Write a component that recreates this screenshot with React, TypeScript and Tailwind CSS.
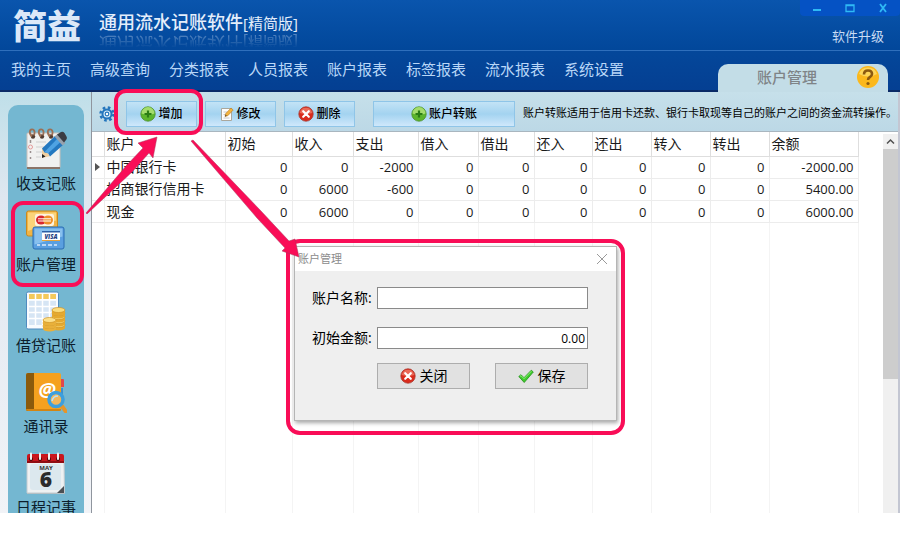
import { useState } from 'react'

const navItems = [
  '我的主页',
  '高级查询',
  '分类报表',
  '人员报表',
  '账户报表',
  '标签报表',
  '流水报表',
  '系统设置'
]

const columns = [
  { title: '账户', width: 'w-[121px]' },
  { title: '初始', width: 'w-[67px]' },
  { title: '收入', width: 'w-[61px]' },
  { title: '支出', width: 'w-[65px]' },
  { title: '借入', width: 'w-[60px]' },
  { title: '借出', width: 'w-[56px]' },
  { title: '还入', width: 'w-[58px]' },
  { title: '还出', width: 'w-[59px]' },
  { title: '转入', width: 'w-[59px]' },
  { title: '转出', width: 'w-[59px]' },
  { title: '余额', width: 'w-[89px]' }
]

const accounts = [
  { name: '中国银行卡', values: ['0', '0', '-2000', '0', '0', '0', '0', '0', '0', '-2000.00'] },
  { name: '招商银行信用卡', values: ['0', '6000', '-600', '0', '0', '0', '0', '0', '0', '5400.00'] },
  { name: '现金', values: ['0', '6000', '0', '0', '0', '0', '0', '0', '0', '6000.00'] }
]

function NotepadIcon() {
  return (
    <svg viewBox="0 0 42 42" className="size-[42px]">
      <rect x="2" y="5" width="33" height="35" rx="1" fill="#f1f1f0" stroke="#c9c0ba" />
      <path d="M2 39h33v2H2z" fill="#8b7468" />
      <path d="M11 14h10M11 19h8M11 24h6M11 29h5" stroke="#cfcfcf" />
      <path d="M5.500 12v3M5.500 23v2M5.500 29v2" stroke="#9a8f8f" strokeWidth="1.500" />
      <circle cx="5.500" cy="19" r="2" fill="none" stroke="#e59a9a" />
      {[7, 16, 25].map((x) => (
        <g key={x} fill="none">
          <circle cx={x + 1} cy="8.500" r="2.200" fill="#4f3a30" />
          <path d={`M${x} 8.500c-4-4-2-8 1-7 2 1 2 3 1 6`} stroke="#9c6f55" strokeWidth="1.800" />
        </g>
      ))}
      <path d="M17 30l0-10 8.500 8z" fill="#f1cf9f" />
      <path d="M17 30l0-4 3.500 2.500z" fill="#222" />
      <path d="M17 20.500L30 8l8 9-13 11.500-2-3.500-3.500-.5z" fill="#2478c0" />
      <path d="M19.500 24L32.500 10.500l3 3.500L23 25.500z" fill="#4fa3e3" />
      <path d="M29.500 8.500l3-2.500 8 9-3 2.500z" fill="#97a2ad" />
      <path d="M32 6.500L36 4q2-1 3.500 1l2 3.500q1 2-.5 3.500l-2 2.500z" fill="#3b3c42" />
    </svg>
  )
}

function CardsIcon() {
  return (
    <svg viewBox="0 0 42 42" className="size-[42px]">
      <rect x="1.500" y="2" width="31" height="25" rx="2" fill="#f2b445" stroke="#c98a1f" />
      <path d="M3 3.500h28v8L3 22z" fill="#fbd47a" />
      <rect x="10" y="5" width="19" height="12" rx="2" fill="#fdf3e0" />
      <ellipse cx="16" cy="11" rx="5" ry="4.500" fill="#d9252e" />
      <ellipse cx="23" cy="11" rx="5" ry="4.500" fill="#f0902a" />
      <path d="M13 9.800h13M13 12h13" stroke="#fff" />
      <rect x="8" y="18" width="31" height="22" rx="2" fill="#5a9fe0" stroke="#2b6db3" />
      <path d="M9.500 19.500h28v8l-28 8z" fill="#88c0ee" />
      <rect x="17" y="22" width="18" height="10" rx="1" fill="#fff" />
      <path d="M17 22h18v1.500H17z" fill="#2a5fa5" />
      <path d="M17 31h18v1H17z" fill="#e9a23b" />
      <text x="26" y="29.500" textAnchor="middle" fontSize="6" fontWeight="900" fontStyle="italic" fill="#1e3f83">
        VISA
      </text>
      <path d="M12 36h3M17 36h4M23 36h4M29 36h3" stroke="#dcecfb" strokeWidth="1.500" />
    </svg>
  )
}

function LedgerIcon() {
  return (
    <svg viewBox="0 0 42 42" className="size-[42px]">
      <rect x="1.500" y="2" width="32" height="37" rx="1.500" fill="#f8fbfe" stroke="#4f8bbf" />
      <path d="M4 4h27v5H4z" fill="#f3c95c" />
      <path d="M4 10h27v25H4z" fill="#d6e5f4" />
      <path
        d="M4 10h27M4 16.500h27M4 22.500h27M4 28.500h27M10.500 3v32M17.500 3v32M24.500 3v32"
        stroke="#fff"
        strokeWidth="1.500"
      />
      {[35, 31, 27, 23, 20].map((y) => (
        <g key={y}>
          <path d={`M27 ${y}v3a6.500 2.500 0 0 0 13 0v-3z`} fill="#e5a92f" />
          <ellipse cx="33.500" cy={y} rx="6.500" ry="2.500" fill="#fbdc7b" stroke="#cf9426" strokeWidth=".7" />
        </g>
      ))}
      {[36, 33, 30].map((y) => (
        <g key={y}>
          <path d={`M18 ${y}v3a6.500 2.500 0 0 0 13 0v-3z`} fill="#e9b03a" />
          <ellipse cx="24.500" cy={y} rx="6.500" ry="2.500" fill="#fde08a" stroke="#cf9426" strokeWidth=".7" />
        </g>
      ))}
    </svg>
  )
}

function AddressBookIcon() {
  return (
    <svg viewBox="0 0 42 42" className="size-[42px]">
      <path d="M35 8h3q1 0 1 1v7h-4z" fill="#e2474c" />
      <path d="M35 17h3v7h-3z" fill="#3c8fce" />
      <rect x="1" y="2" width="35" height="38" rx="2" fill="#f5a11f" />
      <path d="M1 4q0-2 2-2h6v38H3q-2 0-2-2z" fill="#8a5a0c" />
      <path d="M1 38h35v1q0 1-2 1H3q-2 0-2-2z" fill="#d48512" />
      <text x="22" y="26" textAnchor="middle" fontSize="20" fontWeight="700" fontStyle="italic" fill="#fff">
        @
      </text>
      <path d="M36 34l6 8" stroke="#e5952a" strokeWidth="4" />
      <circle cx="31" cy="28.500" r="7" fill="#f2b75b" stroke="#3d9fdd" strokeWidth="3.500" />
      <path d="M27 30q1-5 6-5" fill="none" stroke="#b9e2f8" strokeWidth="1.500" />
    </svg>
  )
}

function CalendarIcon() {
  return (
    <svg viewBox="0 0 42 42" className="size-[42px]">
      <path d="M2 39h38v3H2z" fill="#a9b4b9" />
      <path d="M2 9h37l.5 32H2z" fill="#eef1f2" stroke="#c3cbd0" />
      <rect x="5" y="12" width="31" height="26" rx="3" fill="#dce8ee" />
      <path d="M2 4q0-2 2-2h33q2 0 2 2v7H2z" fill="#c9161d" />
      <path d="M2 9h37v2H2z" fill="#8f0d12" />
      {[6, 15, 24, 33].map((x) => (
        <g key={x}>
          <circle cx={x} cy="7" r="2" fill="#4c0608" />
          <path d={`M${x} 1.500v5.500`} stroke="#f1f1f1" strokeWidth="2" strokeLinecap="round" />
        </g>
      ))}
      <text x="21" y="18" textAnchor="middle" fontSize="6" fontWeight="700" fill="#333">
        MAY
      </text>
      <text x="21" y="35" textAnchor="middle" fontSize="21" fontWeight="800" fill="#2b2b2b">
        6
      </text>
      <path d="M32 41l7-7v7z" fill="#4b5054" />
    </svg>
  )
}

function GearIcon() {
  return (
    <svg viewBox="0 0 16 16" className="size-4 shrink-0">
      <circle cx="8" cy="8" r="6.500" fill="none" stroke="#2475bd" strokeWidth="2.500" strokeDasharray="2.600 2.505" />
      <circle cx="8" cy="8" r="4.500" fill="#d7ecf8" stroke="#2475bd" strokeWidth="2" />
      <circle cx="8" cy="8" r="1.800" fill="#fff" stroke="#2475bd" strokeWidth="1.200" />
    </svg>
  )
}

function AddIcon() {
  return (
    <svg viewBox="0 0 16 16" className="size-4">
      <circle cx="8" cy="8" r="7.200" fill="#5cb52c" stroke="#4d8f2a" strokeWidth=".8" />
      <path d="M1.500 7.500a6.500 6.500 0 0 1 13 0q-6 2.500-13 0z" fill="#a4dc6c" />
      <path d="M8 4.500v7M4.500 8h7" stroke="#2b7d14" strokeWidth="2.200" />
    </svg>
  )
}

function EditIcon() {
  return (
    <svg viewBox="0 0 14 14" className="size-3.5">
      <path d="M1.500 1.500h10v12h-10z" fill="#fdfdfd" stroke="#aaa79c" />
      <path d="M3.500 5h4M3.500 7.500h3M3.500 11h6" stroke="#c8c8c8" />
      <path d="M5 9.500l.8-3L11 1l2.200 2-5.400 5.700z" fill="#f2b33d" stroke="#b37a26" strokeWidth=".6" />
      <path d="M5 9.500l.6-1.800 1.200 1z" fill="#4a3a2a" />
    </svg>
  )
}

function CancelIcon() {
  return (
    <svg viewBox="0 0 16 16" className="size-4">
      <circle cx="8" cy="8" r="7.200" fill="#d92b1c" stroke="#a93a30" strokeWidth=".8" />
      <path d="M1.800 7a6.300 6.300 0 0 1 12.400 0q-6 2-12.400 0z" fill="#ea6a58" />
      <path d="M5.200 5.200l5.600 5.600M10.800 5.200l-5.600 5.600" stroke="#fff" strokeWidth="2.200" strokeLinecap="round" />
    </svg>
  )
}

function CheckIcon() {
  return (
    <svg viewBox="0 0 16 16" className="size-4">
      <path d="M.8 8.500L3 6.700l3 3 7.300-7.500 2 1.800L6.200 14.500z" fill="#3ecb2c" stroke="#23901a" strokeWidth=".8" />
      <path d="M2 8.300l1-.6 3 3 7.400-7.500" fill="none" stroke="#8cee77" />
    </svg>
  )
}

const sideItems = [
  { label: '收支记账', icon: <NotepadIcon /> },
  { label: '账户管理', icon: <CardsIcon />, marked: true },
  { label: '借贷记账', icon: <LedgerIcon /> },
  { label: '通讯录', icon: <AddressBookIcon /> },
  { label: '日程记事', icon: <CalendarIcon /> }
]

function ToolButton({ icon, label, className }: { icon: React.ReactNode; label: string; className: string }) {
  return (
    <button
      className={`flex h-[26px] shrink-0 items-center justify-center gap-0.5 border border-[#8fc5e8] bg-linear-to-b from-[#c3e3f6] via-[#a3d3f0] to-[#cfe8fb] text-xs font-medium text-black ${className}`}
    >
      {icon}
      {label}
    </button>
  )
}

function Header() {
  return (
    <header className="shrink-0 border-b-2 border-[#0a2a66] bg-[#04479a]">
      <div className="flex h-[51px] justify-between border-b border-[#2f6fbc] bg-linear-to-b from-[#0a55ad] to-[#02479a]">
        <div className="flex items-start gap-[18px] pl-[13px]">
          <h1 className="pt-2 text-[34px] leading-[36px] font-black text-[#dbe8f8]">简益</h1>
          <div className="pt-3 whitespace-nowrap text-[#e4eefb]">
            <p className="text-lg leading-5 font-medium">
              通用流水记账软件<span className="text-[15px] font-normal">[精简版]</span>
            </p>
            <p aria-hidden="true" className="-scale-y-100 mask-t-from-0% mask-t-to-70% text-lg leading-5 opacity-40">
              通用流水记账软件<span className="text-[15px]">[精简版]</span>
            </p>
          </div>
        </div>
        <div className="flex flex-col items-end">
          <div className="flex h-4 w-[100px] items-center justify-around rounded-b bg-[#0552c4] text-[#2fb9f5]">
            <button aria-label="最小化">
              <svg viewBox="0 0 10 10" className="size-2.5">
                <path d="M1 7h8" stroke="currentColor" strokeWidth="2" />
              </svg>
            </button>
            <button aria-label="最大化">
              <svg viewBox="0 0 10 10" className="size-2.5">
                <path d="M1 2h8v6.500H1zM1 2.500h8" fill="none" stroke="currentColor" strokeWidth="1.300" />
              </svg>
            </button>
            <button aria-label="退出">
              <svg viewBox="0 0 10 10" className="size-2.5">
                <path d="M2 1l6 8M8 1L2 9" stroke="currentColor" strokeWidth="1.800" />
              </svg>
            </button>
          </div>
          <a href="#upgrade" className="mt-2.5 mr-4 text-[13px] leading-5 text-[#c9dcf4]">
            软件升级
          </a>
        </div>
      </div>
      <div className="flex h-[39px] items-start justify-between bg-linear-to-b from-[#04479a] to-[#043f92]">
        <nav className="flex gap-[19px] pt-1.5 pl-[11px]">
          {navItems.map((item) => (
            <a key={item} href="#nav" className="text-[15px] leading-6 whitespace-nowrap text-[#b9d7f8]">
              {item}
            </a>
          ))}
        </nav>
        <div className="mt-[13px] mr-3 -mb-0.5 flex h-[30px] w-[170px] items-center justify-between rounded-t-[10px] bg-[#c3dde7] pr-2 pb-1 pl-[39px] text-[15px] font-medium text-[#7f8487]">
          账户管理
          <button aria-label="帮助">
            <svg viewBox="0 0 24 24" className="size-6">
              <circle cx="12" cy="12" r="11" fill="#fbb81c" />
              <path d="M3 9a9.500 9.500 0 0 1 18 0q-9 5-18 0z" fill="#fdd65a" />
              <path d="M8 9.500q0-4 4-4t4 3.500q0 2-2 3t-2 3" fill="none" stroke="#8c5a10" strokeWidth="2.600" />
              <circle cx="12" cy="18.500" r="1.600" fill="#8c5a10" />
            </svg>
          </button>
        </div>
      </div>
    </header>
  )
}

function Sidebar() {
  return (
    <aside className="flex w-[92px] shrink-0 border-r border-[#8f959e] bg-linear-to-b from-[#bfdfe9] via-[#dfe7f0] via-25% to-[#f1f3f7] pt-[13px] pr-[7px] pl-2">
      <ul className="w-full rounded-t-[10px] bg-[#74b7d1] pt-[21px]">
        {sideItems.map((item) => (
          <li key={item.label} className="relative h-[81px]">
            <button className="flex w-full flex-col items-center gap-px pt-0.5">
              {item.icon}
              <span className="text-[15px] leading-6 text-[#0c1d2c]">{item.label}</span>
            </button>
            {item.marked && (
              <span className="pointer-events-none absolute -top-1.5 left-[3px] h-[86px] w-[73px] rounded-[12px] border-4 border-[#f90d57]" />
            )}
          </li>
        ))}
      </ul>
    </aside>
  )
}

function AccountTable() {
  return (
    <table className="w-[766px] table-fixed border-collapse text-sm leading-[18px] text-[#1a1a1a]">
      <colgroup>
        <col className="w-3" />
        {columns.map((c) => (
          <col key={c.title} className={c.width} />
        ))}
      </colgroup>
      <thead>
        <tr className="h-6">
          <th className="border-r border-b border-[#dedede] p-0" />
          {columns.map((c) => (
            <th key={c.title} className="border-r border-b border-[#dedede] p-0 pl-0.5 text-left font-normal">
              {c.title}
            </th>
          ))}
        </tr>
      </thead>
      <tbody>
        {accounts.map((row, i) => (
          <tr key={row.name} className="h-[21px]">
            <td className="border-r border-b border-[#ececec] p-0 pl-[3px]">
              {i === 0 && (
                <svg viewBox="0 0 5 8" className="h-2 w-[5px]">
                  <path d="M0 0l5 4-5 4z" fill="#555" />
                </svg>
              )}
            </td>
            <td className="border-r border-b border-[#ececec] p-0 pl-0.5 whitespace-nowrap">{row.name}</td>
            {row.values.map((v, j) => (
              <td key={j} className="border-r border-b border-[#ececec] p-0 pr-1 text-right text-[13px] leading-[18px]">
                {v}
              </td>
            ))}
          </tr>
        ))}
        <tr className="h-[274px]" aria-hidden="true">
          <td className="border-r border-[#f4f4f4] p-0" />
          {columns.map((c) => (
            <td key={c.title} className="border-r border-[#f4f4f4] p-0" />
          ))}
        </tr>
      </tbody>
    </table>
  )
}

function AccountDialog() {
  const [name, setName] = useState('')
  const [amount, setAmount] = useState('0.00')

  return (
    <div className="absolute top-[147px] left-[194px] w-[339px] rounded-[14px] border-4 border-[#f90d57] px-1 pt-[3px] pb-2.5">
      <div
        role="dialog"
        aria-label="账户管理"
        className="h-[175px] border border-[#b5b5b5] bg-[#efefef] shadow-[1px_2px_4px_rgba(0,0,0,0.35)]"
      >
        <div className="flex h-6 items-center justify-between bg-white pr-2 pl-[3px] text-[11px] text-[#8c8c8c]">
          账户管理
          <button aria-label="关闭窗口">
            <svg viewBox="0 0 12 12" className="size-3">
              <path d="M1 1l10 10M11 1L1 11" stroke="#9a9a9a" />
            </svg>
          </button>
        </div>
        <form className="flex flex-col gap-[18px] pt-4 pr-7 pl-[17px] text-sm text-black">
          <div className="flex items-center">
            <label htmlFor="name" className="w-[65px] shrink-0 leading-5 whitespace-nowrap">
              账户名称:
            </label>
            <input
              id="name"
              value={name}
              onChange={(e) => setName(e.target.value)}
              className="h-[22px] w-full min-w-0 border border-[#8a8a8a] bg-white px-0.5"
            />
          </div>
          <div className="flex items-center">
            <label htmlFor="amount" className="w-[65px] shrink-0 leading-5 whitespace-nowrap">
              初始金额:
            </label>
            <input
              id="amount"
              value={amount}
              onChange={(e) => setAmount(e.target.value)}
              className="h-[22px] w-full min-w-0 border border-[#8a8a8a] bg-white px-0.5 text-right text-xs"
            />
          </div>
          <div className="-mt-1 flex justify-between pl-[65px]">
            <button
              type="button"
              className="flex h-[26px] w-[93px] items-center justify-center gap-1 border border-[#adadad] bg-[#e1e1e1]"
            >
              <CancelIcon />
              关闭
            </button>
            <button
              type="button"
              className="flex h-[26px] w-[93px] items-center justify-center gap-1 border border-[#adadad] bg-[#e1e1e1]"
            >
              <CheckIcon />
              保存
            </button>
          </div>
        </form>
      </div>
    </div>
  )
}

export default function App() {
  return (
    <div className="h-screen bg-white pb-5 font-['Open_Sans','Noto_Sans_CJK_SC',sans-serif]">
      <div className="flex h-full flex-col overflow-hidden">
        <Header />
        <div className="relative flex min-h-0 flex-1">
          <Sidebar />
          <main className="relative flex min-w-0 flex-1 flex-col border-r-2 border-[#c3c6d2]">
            <div className="flex h-10 shrink-0 items-center border-b border-[#a9b6bf] bg-linear-to-b from-[#c6e0ea] to-[#bcd8e6] pt-2 pb-1 pl-[7px]">
              <button aria-label="设置">
                <GearIcon />
              </button>
              <div className="relative ml-[11px]">
                <ToolButton icon={<AddIcon />} label="增加" className="w-[71px]" />
                <span className="pointer-events-none absolute -top-3 -left-3 h-[46px] w-[89px] rounded-[12px] border-4 border-[#f90d57]" />
              </div>
              <ToolButton icon={<EditIcon />} label="修改" className="ml-2 w-[71px]" />
              <ToolButton icon={<CancelIcon />} label="删除" className="ml-2 w-[71px]" />
              <ToolButton icon={<AddIcon />} label="账户转账" className="ml-[18px] w-[142px]" />
              <p className="ml-2 text-[11px] whitespace-nowrap text-black">
                账户转账适用于信用卡还款、银行卡取现等自己的账户之间的资金流转操作。
              </p>
            </div>
            <div className="flex min-h-0 flex-1 justify-between overflow-hidden">
              <AccountTable />
              <div className="mt-0.5 flex w-[15px] shrink-0 flex-col bg-[#f0f0f0]">
                <svg viewBox="0 0 15 15" className="size-[15px] shrink-0">
                  <path d="M4 9.500L7.500 6 11 9.500" fill="none" stroke="#505050" strokeWidth="1.500" />
                </svg>
                <div className="h-[230px] shrink-0 bg-[#cdcdcd]" />
              </div>
            </div>
            <AccountDialog />
          </main>
          {/* guide arrows */}
          <svg viewBox="0 0 320 180" className="pointer-events-none absolute top-0 left-0 h-[180px] w-[320px]">
            <g fill="#f90d57" stroke="#a83a5c" strokeWidth=".5">
              <path d="M86 121L126 74 143 56 138 51 157 45 153 66 149 61 132 80 87 122z" />
              <path d="M191 49l2-1 68 71 28 30 6-2 4 18-17-6 3-3-28-30z" />
            </g>
          </svg>
        </div>
      </div>
    </div>
  )
}
